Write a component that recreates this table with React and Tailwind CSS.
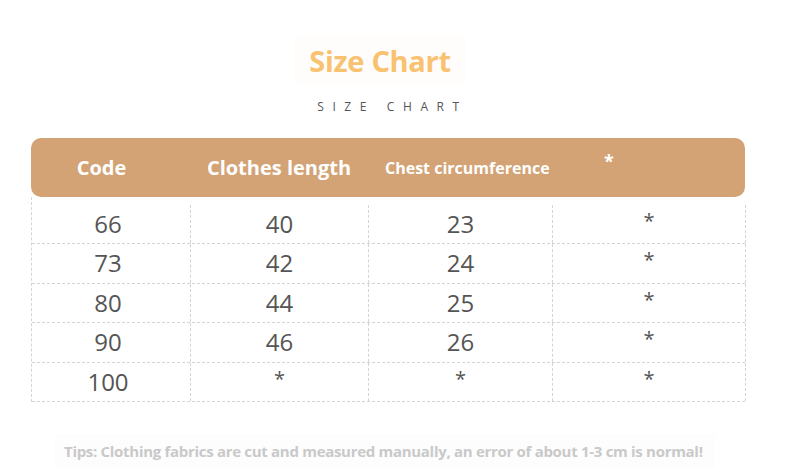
import React from "react";

const rows = [
  ["66", "40", "23", "*"],
  ["73", "42", "24", "*"],
  ["80", "44", "25", "*"],
  ["90", "46", "26", "*"],
  ["100", "*", "*", "*"],
];

const cols = "grid grid-cols-[159px_178px_184px_193px]";

const App = () => {
  return (
    <div
      className="w-[790px] h-[476px] bg-white relative overflow-hidden"
      style={{ fontFamily: '"Open Sans", "Liberation Sans", sans-serif' }}
    >
      {/* title */}
      <div className="flex flex-col items-center pt-[36px]">
        <div className="px-[14px] h-[48px] flex items-center bg-[#fefdfb] mr-[30px]">
          <h1 className="text-[29px] font-bold text-[#f8c271] tracking-[-0.3px] leading-none">
            Size Chart
          </h1>
        </div>
        <p className="mt-[17px] text-[12px] text-[#555] tracking-[8.6px] leading-none pl-[9px] mr-[14px]">
          SIZE CHART
        </p>
      </div>

      {/* table */}
      <div className="ml-[31px] mt-[25px] w-[714px]">
        <div className={`${cols} h-[59px] bg-[#d3a375] rounded-[10px] text-white font-bold items-center`}>
          <div className="text-[20px] text-center pr-[18px]">Code</div>
          <div className="text-[20px] text-center">Clothes length</div>
          <div className="text-[16px] pl-[17px]">Chest circumference</div>
          <div className="text-[18px] pl-[52px] -mt-[12px]">*</div>
        </div>
        <div className="border-l border-dashed border-[#d4d4d4]">
          {rows.map((r, i) => (
            <div
              key={i}
              className={`${cols} border-b border-dashed border-[#d4d4d4] ${i === 0 ? "h-[47px] pt-[8px]" : "h-[39.5px]"}`}
            >
              {r.map((c, j) => (
                <div
                  key={j}
                  className={`flex items-center justify-center border-r border-dashed border-[#d4d4d4] text-[#555] ${c === "*" ? "text-[20px] pb-[6px]" : "text-[24px]"} ${j === 0 ? "pr-[6px]" : ""}`}
                >
                  {c}
                </div>
              ))}
            </div>
          ))}
        </div>
      </div>

      {/* tips */}
      <div className="mt-[32px] ml-[55px] w-[660px] h-[34px] flex items-center bg-[#fdfdfd]">
        <p className="pl-[9px] text-[15px] font-bold text-[#c9c9c9] tracking-[-0.3px] leading-none">
          Tips: Clothing fabrics are cut and measured manually, an error of about 1-3 cm is normal!
        </p>
      </div>
    </div>
  );
};

export default App;
